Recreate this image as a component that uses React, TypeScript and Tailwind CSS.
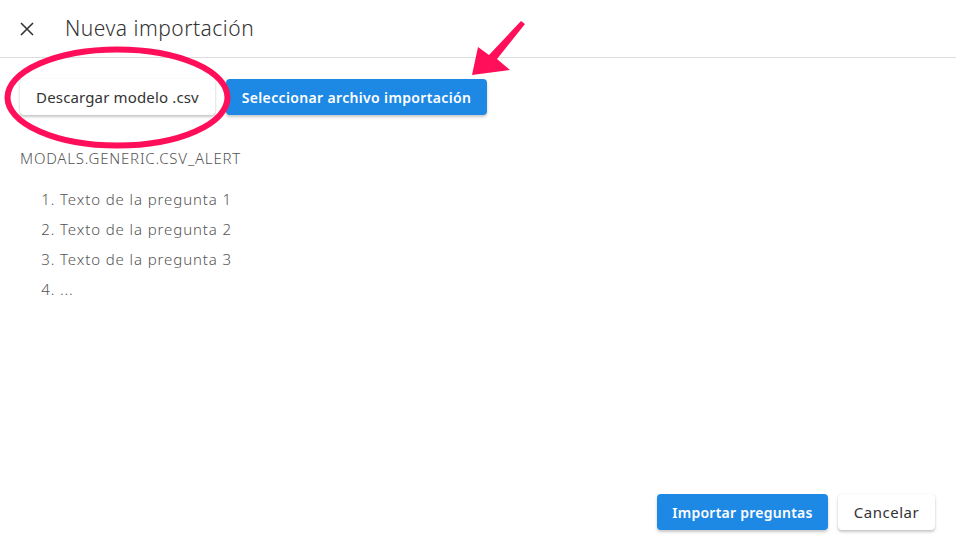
import React from "react";

const F = { fontFamily: '"Noto Sans", sans-serif' };

export default function App() {
  return (
    <div className="w-[956px] h-[542px] bg-white relative overflow-hidden text-[#333]" style={F}>
      <div className="flex items-center h-[58px] border-b border-[#dcdcdc] px-5">
        <svg width="14" height="14" viewBox="0 0 14 14" className="mr-[31px]">
          <path d="M1 1L13 13M13 1L1 13" stroke="#333" strokeWidth="1.6" />
        </svg>
        <span className="text-[21px] font-light tracking-[0.5px]">Nueva importación</span>
      </div>
      <div className="px-5 pt-[21px]">
        <div className="flex gap-[11px]">
          <button className="h-9 w-[195px] bg-white rounded shadow-[0_2px_3px_rgba(0,0,0,0.22),0_0_1px_rgba(0,0,0,0.15)] text-[15px] tracking-[0.15px] text-[#333]">
            Descargar modelo .csv
          </button>
          <button className="h-9 w-[261px] bg-[#1e88e5] rounded shadow-[0_2px_3px_rgba(0,0,0,0.22)] text-[14px] font-semibold tracking-[0.35px] text-white">
            Seleccionar archivo importación
          </button>
        </div>
        <div className="mt-[32px] text-[15px] font-light tracking-[0.8px] text-[#555]">MODALS.GENERIC.CSV_ALERT</div>
        <ol className="mt-[14px] pl-[40px] list-decimal text-[15px] font-light tracking-[0.9px] text-[#555] leading-[30px]">
          <li>Texto de la pregunta 1</li>
          <li>Texto de la pregunta 2</li>
          <li>Texto de la pregunta 3</li>
          <li>...</li>
        </ol>
      </div>
      <div className="absolute right-[21px] bottom-[12px] flex gap-[10px]">
        <button className="h-9 w-[171px] bg-[#1e88e5] rounded shadow-[0_2px_3px_rgba(0,0,0,0.22)] text-[14px] font-semibold tracking-[0.25px] text-white">
          Importar preguntas
        </button>
        <button className="h-9 w-[97px] bg-white rounded shadow-[0_2px_3px_rgba(0,0,0,0.22),0_0_1px_rgba(0,0,0,0.15)] text-[15px] tracking-[0.5px] text-[#333]">
          Cancelar
        </button>
      </div>
      <svg className="absolute left-0 top-0 pointer-events-none" width="956" height="542">
        <ellipse cx="117.5" cy="97.5" rx="110" ry="48" fill="none" stroke="#ff0f5a" strokeWidth="6" />
        <path d="M521 21 L525 24 L497 59 L510 70 L472 75 L478 47 L489 55 Z" fill="#ff0f5a" />
      </svg>
    </div>
  );
}
